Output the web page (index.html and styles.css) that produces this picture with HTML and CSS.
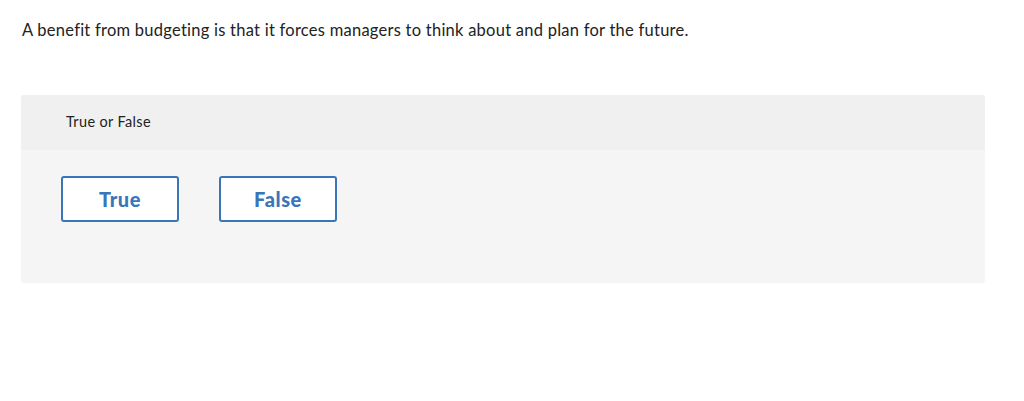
FILE: index.html
```html
<!DOCTYPE html>
<html>
<head>
<meta charset="utf-8">
<link rel="stylesheet" href="styles.css">
</head>
<body>
<p class="question">A benefit from budgeting is that it forces managers to think about and plan for the future.</p>
<div class="panel">
  <div class="panel-head">True or False</div>
  <div class="panel-body">
    <button class="choice">True</button>
    <button class="choice">False</button>
  </div>
</div>
</body>
</html>
```
FILE: styles.css
```css
body {
  margin: 0;
  padding: 0 39px 0 21px;
  font-family: Lato, "Liberation Sans", sans-serif;
  color: #222;
  background: #fff;
}
.question {
  margin: 0;
  padding: 20px 0 0 1px;
  font-size: 16.5px;
  letter-spacing: 0.25px;
  line-height: 20px;
  height: 75px;
}
.panel {
  border-radius: 3px;
  overflow: hidden;
  background: #f5f5f5;
}
.panel-head {
  background: #f0f0f0;
  height: 55px;
  box-sizing: border-box;
  padding: 19px 0 0 45px;
  font-size: 14.5px;
  letter-spacing: 0.35px;
  line-height: 16px;
}
.panel-body {
  display: flex;
  gap: 40px;
  padding: 26px 0 61px 40px;
}
.choice {
  width: 118px;
  height: 46px;
  background: #fff;
  border: 2px solid #3a75b9;
  border-radius: 3px;
  color: #3a75b9;
  font-family: Lato, "Liberation Sans", sans-serif;
  font-weight: 900;
  font-size: 20px;
  letter-spacing: 0.6px;
  padding: 0;
}
```
